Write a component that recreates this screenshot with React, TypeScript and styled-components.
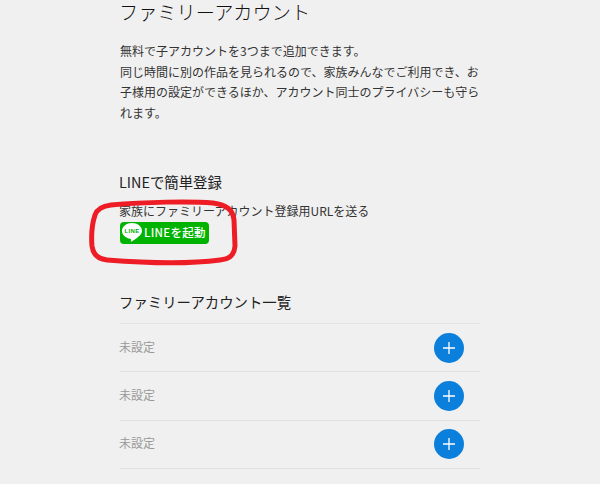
import styled, { createGlobalStyle } from 'styled-components';

const GlobalStyle = createGlobalStyle`
  html, body {
    margin: 0;
    padding: 0;
    height: 484px;
    overflow: hidden;
    background: #f0f0f0;
  }
  body {
    font-family: 'Noto Sans CJK JP', 'Liberation Sans', sans-serif;
    color: #333;
  }
`;

const Page = styled.main`
  position: relative;
  width: 600px;
  height: 484px;
  overflow: hidden;
  box-sizing: border-box;
  padding: 2px 120px 0 120px;
`;

const Title = styled.h1`
  margin: 0 0 0 -1px;
  font-size: 19.2px;
  line-height: 20px;
  font-weight: 300;
  color: #111;
`;

const Lead = styled.p`
  margin: 19px 0 0;
  font-size: 12px;
  line-height: 20.7px;
  color: #333;
`;

const LineSection = styled.section`
  margin-top: 48px;
`;

const SectionTitle = styled.h2`
  margin: 0 0 0 -1px;
  font-size: 14.4px;
  line-height: 20px;
  font-weight: 400;
  color: #222;
`;

const LineNote = styled.p`
  margin: 10px 0 0 -1px;
  font-size: 12px;
  line-height: 18px;
  color: #333;
`;

const LineButton = styled.a`
  display: flex;
  align-items: center;
  gap: 1px;
  width: 89px;
  height: 22px;
  margin-top: 2px;
  box-sizing: border-box;
  padding-left: 1px;
  border-radius: 4px;
  background: #00b300;
  color: #fff;
  font-size: 11.5px;
  letter-spacing: 0.3px;
  font-weight: 500;
  line-height: 1;
  white-space: nowrap;
`;

const AccountSection = styled.section`
  margin-top: 48px;
`;

const AccountList = styled.ul`
  margin: 11px 0 0;
  padding: 0;
  list-style: none;
  border-top: 1px solid #e3e3e3;
`;

const AccountRow = styled.li`
  display: flex;
  align-items: center;
  justify-content: space-between;
  height: 47.4px;
  padding-right: 16px;
  border-bottom: 1px solid #e0e0e0;
`;

const AccountName = styled.span`
  margin: 0 0 3px -1px;
  font-size: 12px;
  color: #999;
`;

const AddButton = styled.button`
  display: flex;
  align-items: center;
  justify-content: center;
  width: 30px;
  height: 30px;
  padding: 0;
  border: 0;
  border-radius: 50%;
  background: #0a7fdc;
`;

const Annotation = styled.svg`
  position: absolute;
  left: 85px;
  top: 196px;
  pointer-events: none;
`;

const LineLogo = () => (
  <svg width="22" height="21" viewBox="0 0 22 21" aria-hidden="true">
    <path
      fill="#fff"
      d="M11 1C5.500 1 1 4.500 1 8.900c0 3.900 3.500 7.100 8.300 7.800.9.200.6 1 .5 2.200-.1.700.5.900 1.200.500 1.800-1 5.300-3.300 7.200-5.300C19.500 13 21 11.100 21 8.900 21 4.500 16.500 1 11 1z"
    />
    <text x="11" y="11" textAnchor="middle" fontSize="6" fontWeight="700" fill="#00b300" fontFamily="'Liberation Sans', sans-serif">
      LINE
    </text>
  </svg>
);

const PlusIcon = () => (
  <svg width="14" height="14" viewBox="0 0 14 14" aria-hidden="true">
    <path d="M7 1v12M1 7h12" stroke="#fff" strokeWidth="1.300" fill="none" />
  </svg>
);

export default function App() {
  return (
    <Page>
      <GlobalStyle />
      <Title>ファミリーアカウント</Title>
      <Lead>
        無料で子アカウントを3つまで追加できます。
        <br />
        同じ時間に別の作品を見られるので、家族みんなでご利用でき、お子様用の設定ができるほか、アカウント同士のプライバシーも守られます。
      </Lead>
      <LineSection>
        <SectionTitle>LINEで簡単登録</SectionTitle>
        <LineNote>家族にファミリーアカウント登録用URLを送る</LineNote>
        <LineButton>
          <LineLogo />
          LINEを起動
        </LineButton>
      </LineSection>
      <AccountSection>
        <SectionTitle>ファミリーアカウント一覧</SectionTitle>
        <AccountList>
          {[0, 1, 2].map((i) => (
            <AccountRow key={i}>
              <AccountName>未設定</AccountName>
              <AddButton aria-label="追加">
                <PlusIcon />
              </AddButton>
            </AccountRow>
          ))}
        </AccountList>
      </AccountSection>
      <Annotation width="156" height="74" viewBox="0 0 156 74">
        <path
          d="M26 9C60 6 105 5 128 7C142 9 148 14 149 24L150 50C149 60 144 63 135 64C105 68 60 67 22 64C12 63 8 58 7 50C6 38 7 28 10 19C12 13 18 10 26 9z"
          fill="none"
          stroke="#ee1c25"
          strokeWidth="5"
        />
      </Annotation>
    </Page>
  );
}
